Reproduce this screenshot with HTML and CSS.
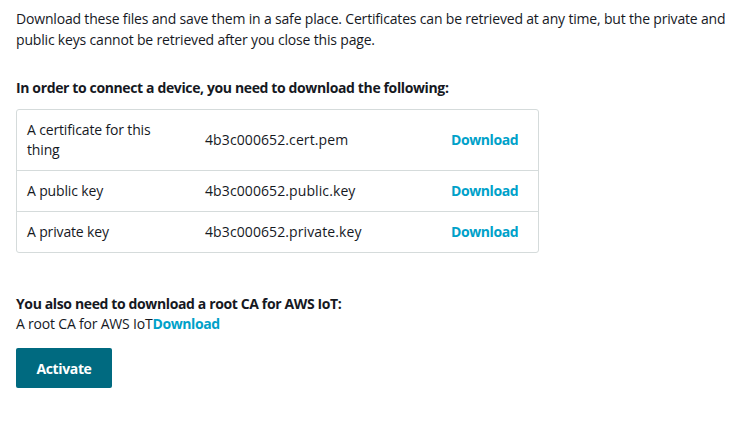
FILE: index.html
```html
<!DOCTYPE html>
<html>
<head>
<meta charset="utf-8">
<link rel="stylesheet" href="styles.css">
</head>
<body>
<div class="page">
  <p class="intro">Download these files and save them in a safe place. Certificates can be retrieved at any time, but the private and public keys cannot be retrieved after you close this page.</p>
  <h2 class="heading">In order to connect a device, you need to download the following:</h2>
  <div class="files">
    <div class="row">
      <div class="cell">A certificate for this thing</div>
      <div class="cell file">4b3c000652.cert.pem</div>
      <div class="cell"><a class="link" href="#">Download</a></div>
    </div>
    <div class="row">
      <div class="cell">A public key</div>
      <div class="cell file">4b3c000652.public.key</div>
      <div class="cell"><a class="link" href="#">Download</a></div>
    </div>
    <div class="row">
      <div class="cell">A private key</div>
      <div class="cell file">4b3c000652.private.key</div>
      <div class="cell"><a class="link" href="#">Download</a></div>
    </div>
  </div>
  <h2 class="heading root">You also need to download a root CA for AWS IoT:</h2>
  <p class="rootline">A root CA for AWS IoT<a class="link" href="#">Download</a></p>
  <button class="activate">Activate</button>
</div>
</body>
</html>
```
FILE: styles.css
```css
html, body {
  margin: 0;
  padding: 0;
  background: #ffffff;
}
body {
  font-family: "Open Sans", "Noto Sans", sans-serif;
  font-size: 14px;
  color: #16191f;
}
.page {
  padding: 8px 16px;
}
.intro {
  margin: 0;
  line-height: 21px;
  letter-spacing: -0.18px;
}
.heading {
  margin: 28px 0 11px;
  font-size: 14px;
  font-weight: 700;
  line-height: 20px;
  letter-spacing: -0.37px;
}
.files {
  width: 523px;
  box-sizing: border-box;
  border: 1px solid #d5dbdb;
  border-radius: 3px;
}
.row {
  display: grid;
  grid-template-columns: 178px 246px 1fr;
  align-items: center;
  border-top: 1px solid #d5dbdb;
}
.row:first-child {
  border-top: none;
}
.cell {
  padding: 10px;
  line-height: 20px;
  letter-spacing: -0.15px;
}
.file {
  letter-spacing: 0.1px;
}
.link {
  color: #00a1c9;
  font-weight: 700;
  text-decoration: none;
  letter-spacing: -0.4px;
}
.root {
  margin: 41px 0 0;
}
.rootline {
  margin: 0;
  line-height: 20px;
  letter-spacing: -0.2px;
}
.activate {
  display: block;
  margin-top: 14px;
  height: 40px;
  width: 96px;
  padding: 0;
  border: none;
  border-radius: 2px;
  background: #006a80;
  color: #ffffff;
  font-family: inherit;
  font-size: 14px;
  font-weight: 700;
  letter-spacing: -0.37px;
}
```
